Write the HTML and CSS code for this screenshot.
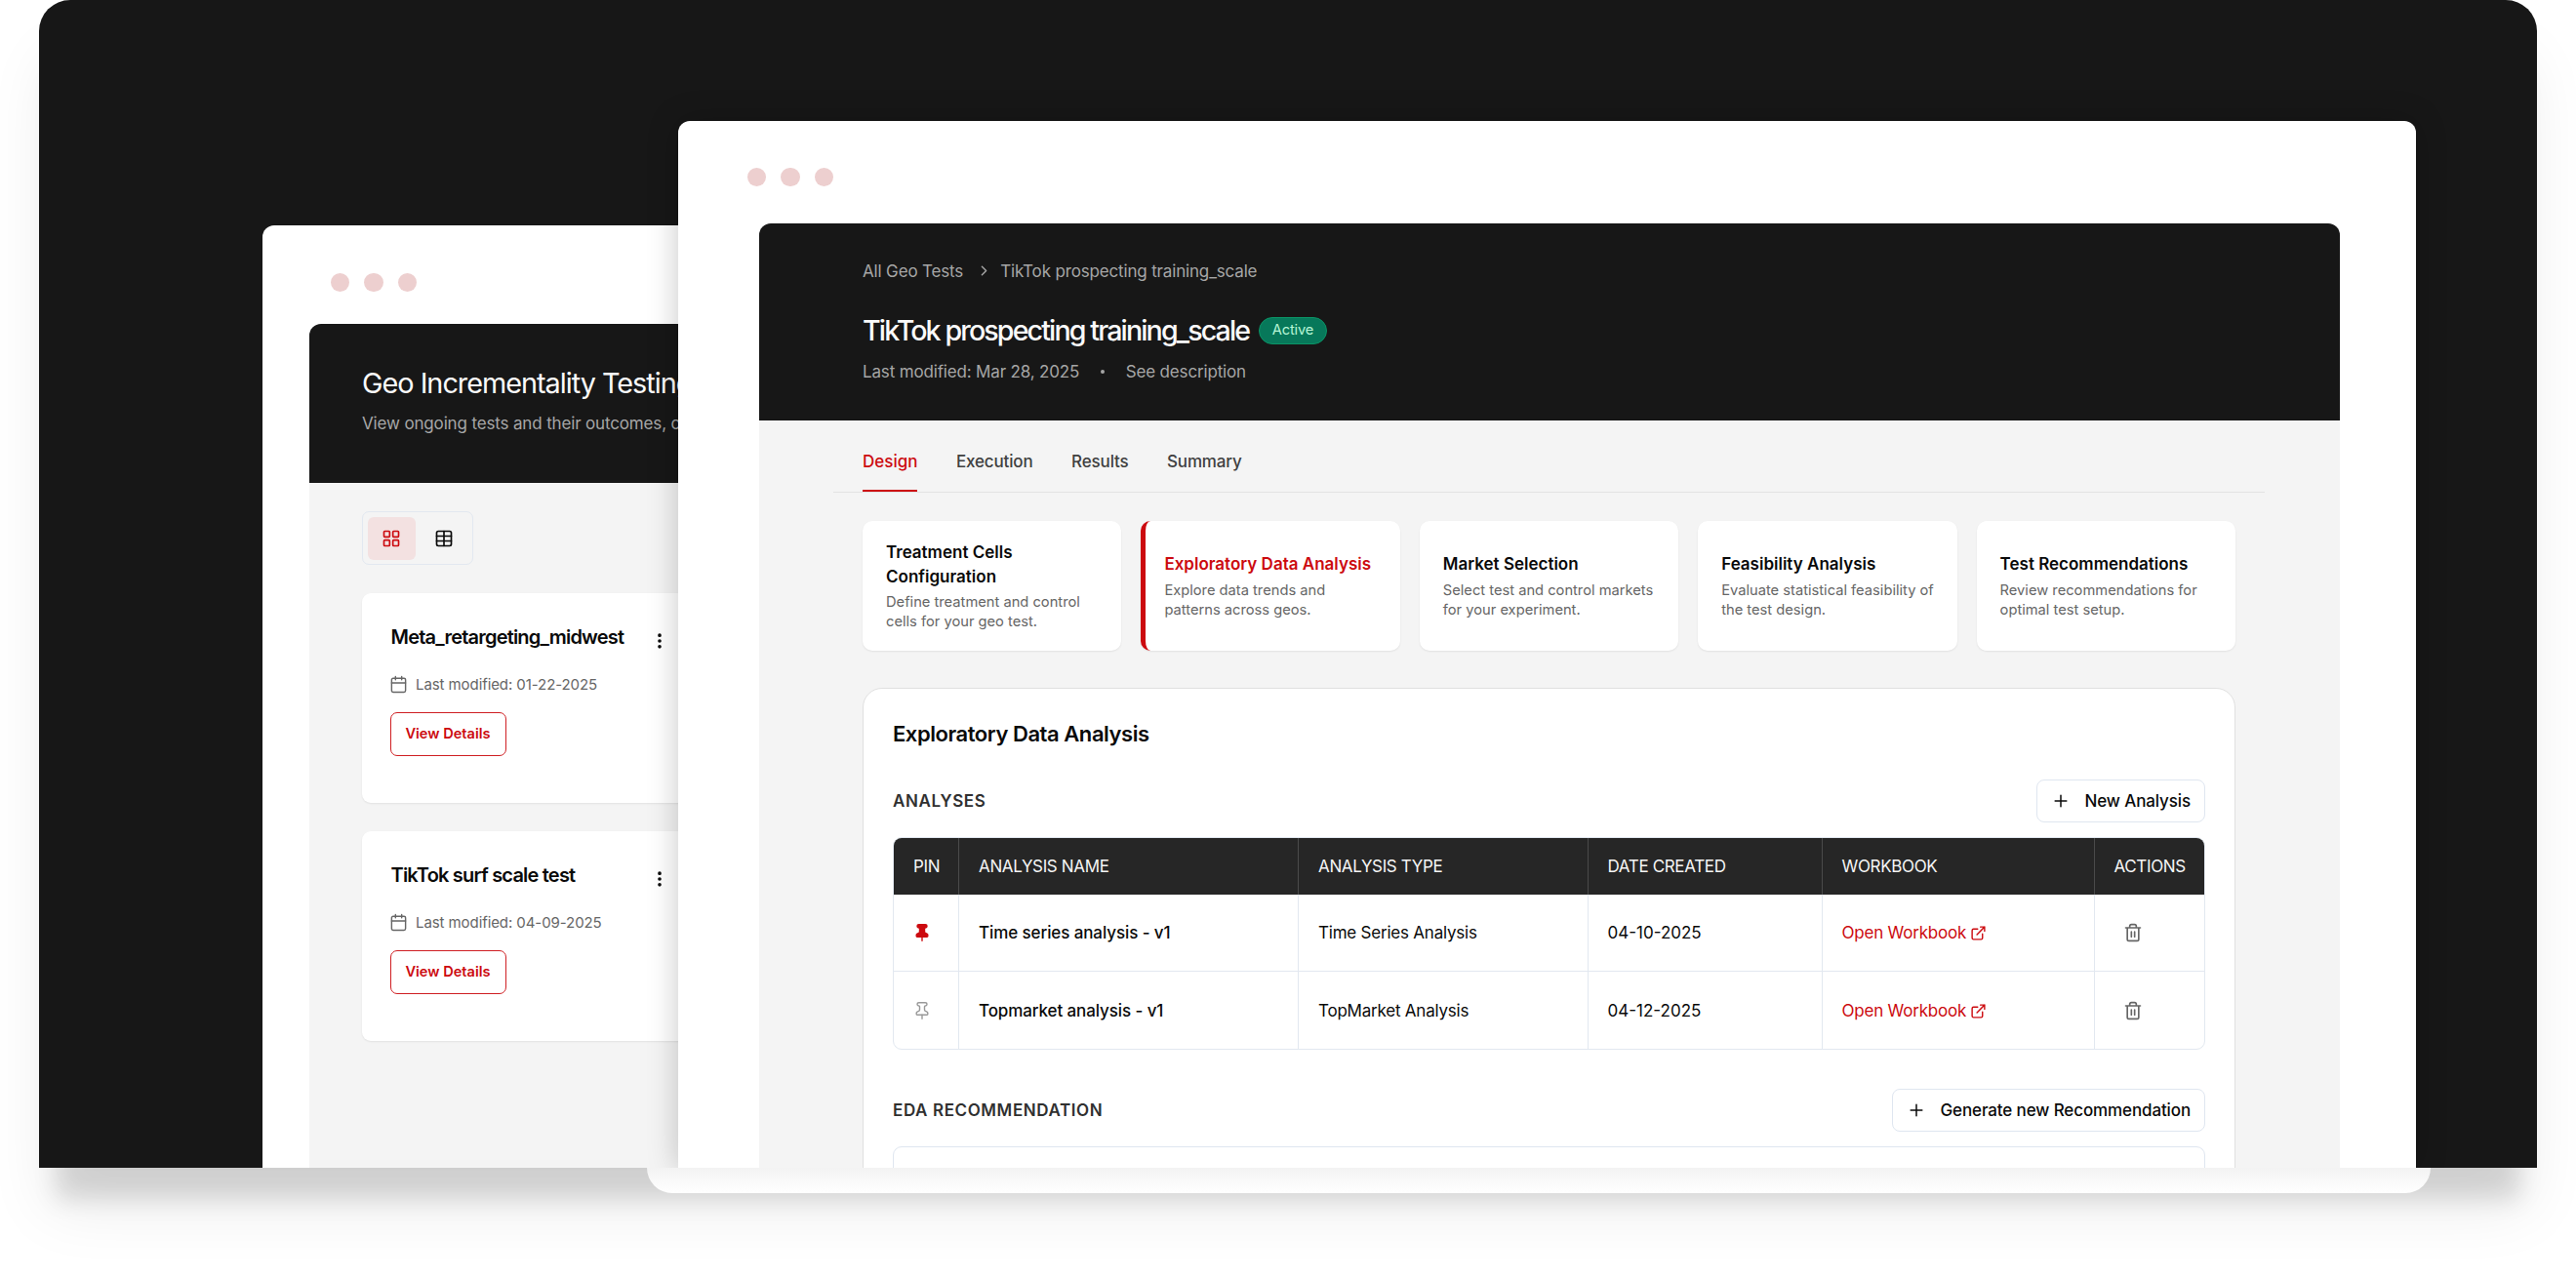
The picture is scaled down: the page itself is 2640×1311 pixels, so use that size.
FILE: index.html
```html
<!DOCTYPE html>
<html lang="en">
<head>
    <meta charset="utf-8">
    <meta name="viewport" content="width=device-width, initial-scale=1">
    <title>Geo Incrementality Testing</title>
    <link rel="stylesheet" href="styles.css">
</head>
<body>
    <!-- shared icons -->
    <svg class="sprite" width="0" height="0">
        <symbol id="icon-calendar" viewBox="0 0 24 24"><rect x="3" y="4" width="18" height="18" rx="2"/><path d="M16 2v4M8 2v4M3 10h18"/></symbol>
        <symbol id="icon-more" viewBox="0 0 24 24"><circle cx="12" cy="12" r="1"/><circle cx="12" cy="5" r="1"/><circle cx="12" cy="19" r="1"/></symbol>
        <symbol id="icon-plus" viewBox="0 0 24 24"><path d="M5 12h14M12 5v14"/></symbol>
        <symbol id="icon-pin" viewBox="0 0 24 24"><path d="M12 17v5"/><path d="M9 10.76a2 2 0 0 1-1.11 1.79l-1.78.9A2 2 0 0 0 5 15.24V16a1 1 0 0 0 1 1h12a1 1 0 0 0 1-1v-.76a2 2 0 0 0-1.11-1.79l-1.78-.9A2 2 0 0 1 15 10.76V7a1 1 0 0 1 1-1 2 2 0 0 0 0-4H8a2 2 0 0 0 0 4 1 1 0 0 1 1 1z"/></symbol>
        <symbol id="icon-external" viewBox="0 0 24 24"><path d="M15 3h6v6M10 14 21 3M18 13v6a2 2 0 0 1-2 2H5a2 2 0 0 1-2-2V8a2 2 0 0 1 2-2h6"/></symbol>
        <symbol id="icon-trash" viewBox="0 0 24 24"><path d="M3 6h18M19 6v14a2 2 0 0 1-2 2H7a2 2 0 0 1-2-2V6M8 6V4a2 2 0 0 1 2-2h4a2 2 0 0 1 2 2v2M10 11v6M14 11v6"/></symbol>
    </svg>

    <div class="scene">
        <div class="stage">

            <section class="window window--back">
                <div class="window__dots"><i></i><i></i><i></i></div>
                <div class="overview">
                    <header class="overview__header">
                        <h1 class="overview__title">Geo Incrementality Testing</h1>
                        <p class="overview__subtitle">View ongoing tests and their outcomes, or create a new test.</p>
                    </header>
                    <div class="overview__body">
                        <div class="view-toggle">
                            <button class="view-toggle__button view-toggle__button--active">
                                <svg class="icon" viewBox="0 0 24 24"><rect x="3" y="3" width="7" height="7" rx="1"/><rect x="14" y="3" width="7" height="7" rx="1"/><rect x="14" y="14" width="7" height="7" rx="1"/><rect x="3" y="14" width="7" height="7" rx="1"/></svg>
                            </button>
                            <button class="view-toggle__button">
                                <svg class="icon" viewBox="0 0 24 24"><path d="M12 3v18M3 9h18M3 15h18"/><rect x="3" y="3" width="18" height="18" rx="2"/></svg>
                            </button>
                        </div>

                        <article class="test-card">
                            <div class="test-card__top">
                                <h2 class="test-card__title">Meta_retargeting_midwest</h2>
                                <svg class="icon test-card__more"><use href="#icon-more"/></svg>
                            </div>
                            <div class="test-card__date"><svg class="icon"><use href="#icon-calendar"/></svg><span>Last modified: 01-22-2025</span></div>
                            <button class="test-card__button">View Details</button>
                        </article>

                        <article class="test-card">
                            <div class="test-card__top">
                                <h2 class="test-card__title">TikTok surf scale test</h2>
                                <svg class="icon test-card__more"><use href="#icon-more"/></svg>
                            </div>
                            <div class="test-card__date"><svg class="icon"><use href="#icon-calendar"/></svg><span>Last modified: 04-09-2025</span></div>
                            <button class="test-card__button">View Details</button>
                        </article>
                    </div>
                </div>
            </section>

            <section class="window window--front">
                <div class="window__dots"><i></i><i></i><i></i></div>
                <div class="detail">
                    <header class="detail__header">
                        <div class="breadcrumb">
                            <span>All Geo Tests</span>
                            <svg class="icon breadcrumb__arrow" viewBox="0 0 24 24"><path d="m9 18 6-6-6-6"/></svg>
                            <span>TikTok prospecting training_scale</span>
                        </div>
                        <div class="detail__heading">
                            <h1 class="detail__title">TikTok prospecting training_scale</h1>
                            <span class="badge">Active</span>
                        </div>
                        <div class="detail__meta">
                            <span>Last modified: Mar 28, 2025</span>
                            <i class="detail__separator"></i>
                            <span>See description</span>
                        </div>
                    </header>

                    <nav class="tabs">
                        <a class="tabs__item tabs__item--active">Design</a>
                        <a class="tabs__item">Execution</a>
                        <a class="tabs__item">Results</a>
                        <a class="tabs__item">Summary</a>
                    </nav>

                    <div class="steps">
                        <div class="step">
                            <h3 class="step__title">Treatment Cells Configuration</h3>
                            <p class="step__text">Define treatment and control cells for your geo test.</p>
                        </div>
                        <div class="step step--active">
                            <h3 class="step__title">Exploratory Data Analysis</h3>
                            <p class="step__text">Explore data trends and patterns across geos.</p>
                        </div>
                        <div class="step">
                            <h3 class="step__title">Market Selection</h3>
                            <p class="step__text">Select test and control markets for your experiment.</p>
                        </div>
                        <div class="step">
                            <h3 class="step__title">Feasibility Analysis</h3>
                            <p class="step__text">Evaluate statistical feasibility of the test design.</p>
                        </div>
                        <div class="step">
                            <h3 class="step__title">Test Recommendations</h3>
                            <p class="step__text">Review recommendations for optimal test setup.</p>
                        </div>
                    </div>

                    <div class="panel">
                        <h2 class="panel__title">Exploratory Data Analysis</h2>

                        <div class="panel__bar">
                            <h3 class="panel__label">ANALYSES</h3>
                            <button class="button"><svg class="icon"><use href="#icon-plus"/></svg><span>New Analysis</span></button>
                        </div>

                        <div class="table">
                            <div class="table__row table__row--head">
                                <div>PIN</div>
                                <div>ANALYSIS NAME</div>
                                <div>ANALYSIS TYPE</div>
                                <div>DATE CREATED</div>
                                <div>WORKBOOK</div>
                                <div>ACTIONS</div>
                            </div>
                            <div class="table__row">
                                <div><svg class="icon table__pin table__pin--on"><use href="#icon-pin"/></svg></div>
                                <div class="table__name">Time series analysis - v1</div>
                                <div>Time Series Analysis</div>
                                <div class="table__date">04-10-2025</div>
                                <div><a class="table__link">Open Workbook<svg class="icon"><use href="#icon-external"/></svg></a></div>
                                <div><svg class="icon table__trash"><use href="#icon-trash"/></svg></div>
                            </div>
                            <div class="table__row">
                                <div><svg class="icon table__pin"><use href="#icon-pin"/></svg></div>
                                <div class="table__name">Topmarket analysis - v1</div>
                                <div>TopMarket Analysis</div>
                                <div class="table__date">04-12-2025</div>
                                <div><a class="table__link">Open Workbook<svg class="icon"><use href="#icon-external"/></svg></a></div>
                                <div><svg class="icon table__trash"><use href="#icon-trash"/></svg></div>
                            </div>
                        </div>

                        <div class="panel__bar panel__bar--second">
                            <h3 class="panel__label">EDA RECOMMENDATION</h3>
                            <button class="button"><svg class="icon"><use href="#icon-plus"/></svg><span>Generate new Recommendation</span></button>
                        </div>
                        <div class="panel__box"></div>
                    </div>
                </div>
            </section>

        </div>
        <div class="scene__lip"></div>
    </div>
</body>
</html>
```

FILE: styles.css
```css
* {
    box-sizing: border-box;
}
body {
    margin: 0;
    background: #fff;
    font-family: Inter, "Liberation Sans", sans-serif;
    font-size: 17px;
    line-height: 24px;
    color: #0a0a0a;
}
h1, h2, h3, p {
    margin: 0;
}
button {
    font: inherit;
    color: inherit;
    background: none;
    border: 0;
    padding: 0;
}
.sprite {
    position: absolute;
}
.icon {
    display: block;
    flex: none;
    width: 20px;
    height: 20px;
    fill: none;
    stroke: currentColor;
    stroke-width: 2;
    stroke-linecap: round;
    stroke-linejoin: round;
}

/* scene */
.scene {
    position: relative;
    height: 1311px;
    padding: 0 40px;
    overflow: hidden;
}
.stage {
    position: relative;
    height: 1197px;
    border-radius: 32px 32px 0 0;
    background: #171717;
    overflow: hidden;
    box-shadow: 0 50px 24px -18px rgba(0, 0, 0, .13), 0 50px 64px -8px rgba(0, 0, 0, .08);
}
.scene__lip {
    position: absolute;
    left: 663px;
    top: 1197px;
    width: 1828px;
    height: 26px;
    border-radius: 0 0 32px 32px;
    background: linear-gradient(#f3f3f3, #fff);
}

/* windows */
.window {
    position: absolute;
    bottom: 0;
    background: #fff;
    border-radius: 12px 12px 0 0;
    overflow: hidden;
}
.window--back {
    left: 229px;
    top: 231px;
    width: 900px;
    padding: 0 48px;
}
.window--front {
    left: 654.5px;
    top: 123.5px;
    width: 1781.5px;
    padding: 0 78.5px 0 83px;
    box-shadow: 0 0 32px rgba(0, 0, 0, .22);
}
.window__dots {
    display: flex;
    gap: 15.2px;
}
.window__dots i {
    width: 19.2px;
    height: 19.2px;
    border-radius: 50%;
    background: #edcfcf;
}
.window--back .window__dots {
    height: 101px;
    padding: 49px 0 0 22px;
}
.window--front .window__dots {
    height: 105px;
    padding-top: 48px;
    margin-left: -11.5px;
}

/* back window */
.overview {
    height: 900px;
    border-radius: 12px 12px 0 0;
    background: #f4f4f4;
    overflow: hidden;
    white-space: nowrap;
}
.overview__header {
    height: 162.5px;
    padding: 43px 54px 0;
    background: #171717;
}
.overview__title {
    font-size: 28.8px;
    font-weight: 400;
    line-height: 36px;
    letter-spacing: -1px;
    color: #fafafa;
}
.overview__subtitle {
    margin-top: 11px;
    letter-spacing: -.15px;
    color: #a6a6a6;
}
.overview__body {
    padding: 29.5px 54px;
}
.view-toggle {
    display: flex;
    gap: 5px;
    width: 114px;
    height: 55px;
    padding: 4.5px;
    border: 1px solid #e2e8f0;
    border-radius: 7px;
}
.view-toggle__button {
    display: flex;
    align-items: center;
    justify-content: center;
    width: 49px;
    height: 44px;
    border-radius: 6px;
}
.view-toggle__button--active {
    background: #f3e1e1;
    color: #cc0a0f;
}
.test-card {
    height: 214.5px;
    margin-top: 29.3px;
    padding: 31px 30px 30px 29.5px;
    border-radius: 9px;
    background: #fff;
    box-shadow: 0 1px 2px rgba(0, 0, 0, .08);
}
.test-card__top {
    display: flex;
    height: 40px;
}
.test-card__title {
    width: 265.5px;
    font-size: 20px;
    font-weight: 600;
    line-height: 28px;
    letter-spacing: -.8px;
}
.test-card__more {
    margin-top: 8px;
    stroke-width: 2.4;
}
.test-card__date {
    display: flex;
    align-items: center;
    gap: 8px;
    margin: 10.5px 0 16px -1.5px;
    font-size: 15px;
    letter-spacing: -.08px;
    color: #666;
}
.test-card__date .icon {
    width: 19px;
    height: 19px;
    stroke-width: 1.8;
}
.test-card__button {
    display: block;
    width: 119px;
    height: 45px;
    margin-left: -1px;
    border: 1.5px solid #cf1f23;
    border-radius: 7px;
    font-size: 14.6px;
    font-weight: 600;
    color: #cc0a0f;
}

/* front window */
.detail {
    height: 1000px;
    border-radius: 12px 12px 0 0;
    background: #f4f4f4;
    overflow: hidden;
}
.detail__header {
    height: 202px;
    padding: 37px 106.5px 0;
    background: #171717;
    color: #a6a6a6;
    letter-spacing: -.16px;
}
.breadcrumb {
    display: flex;
    align-items: center;
}
.breadcrumb__arrow {
    width: 17px;
    height: 17px;
    margin: 0 8.5px 0 12.5px;
}
.detail__heading {
    display: flex;
    align-items: center;
    gap: 10px;
    height: 36px;
    margin-top: 31px;
}
.detail__title {
    font-size: 28.6px;
    font-weight: 500;
    line-height: 36px;
    letter-spacing: -1.87px;
    color: #fafafa;
}
.badge {
    width: 69.5px;
    height: 28px;
    border: 1.5px solid #0a9466;
    border-radius: 14px;
    background: #07785a;
    font-size: 14.7px;
    line-height: 25px;
    text-align: center;
    color: #b5f5d5;
}
.detail__meta {
    display: flex;
    align-items: center;
    margin-top: 12px;
}
.detail__separator {
    width: 4px;
    height: 4px;
    margin: 0 21.5px 0 22px;
    border-radius: 50%;
    background: #a6a6a6;
}
.tabs {
    display: flex;
    gap: 39.5px;
    height: 74.5px;
    margin: 0 76.5px;
    padding-left: 30px;
    border-bottom: 1px solid #e2e2e2;
    font-weight: 500;
    letter-spacing: -.15px;
    color: #404040;
}
.tabs__item {
    height: 73.5px;
    padding-top: 30px;
}
.tabs__item--active {
    color: #cc0a0f;
    border-bottom: 2.5px solid #cc0a0f;
    letter-spacing: 0;
}
.steps {
    display: grid;
    grid-template-columns: repeat(5, 1fr);
    gap: 20px;
    margin: 29px 106.5px 38.5px;
}
.step {
    display: flex;
    flex-direction: column;
    justify-content: center;
    height: 132.5px;
    padding: 1px 20px 0 24px;
    border-radius: 10px;
    background: #fff;
    box-shadow: 0 1px 2px rgba(0, 0, 0, .08);
}
.step--active {
    padding-left: 19px;
    border-left: 5px solid #cc0a0f;
}
.step--active .step__title {
    color: #cc0a0f;
}
.step__title {
    font-size: 17px;
    font-weight: 600;
    line-height: 24.5px;
}
.step__text {
    margin-top: 5px;
    font-size: 14.7px;
    line-height: 19.6px;
    color: #666;
}
.panel {
    height: 560px;
    margin: 0 106.5px;
    padding: 32px 30px 0;
    border: 1px solid #e0e0e0;
    border-radius: 20px;
    background: #fff;
}
.panel__title {
    font-size: 22px;
    font-weight: 600;
    line-height: 28px;
    letter-spacing: -.45px;
}
.panel__bar {
    display: flex;
    align-items: center;
    justify-content: space-between;
    margin: 32.5px 0 15px;
}
.panel__bar--second {
    margin: 40px 0 15px;
}
.panel__label {
    font-size: 17px;
    font-weight: 600;
    letter-spacing: .6px;
    color: #303030;
}
.button {
    display: flex;
    align-items: center;
    gap: 15px;
    height: 44px;
    padding: 0 14px;
    border: 1px solid #dfe6f0;
    border-radius: 8px;
    font-weight: 500;
    letter-spacing: -.12px;
}
.button .icon {
    stroke-width: 1.8;
}
.table {
    border: 1px solid #e2e8f0;
    border-radius: 9px;
    overflow: hidden;
    letter-spacing: -.22px;
}
.table__row {
    display: grid;
    grid-template-columns: 67px 348px 296.5px 240px 279px 1fr;
    height: 79.5px;
    border-bottom: 1px solid #e2e8f0;
}
.table__row:last-child {
    height: 79px;
    border-bottom: 0;
}
.table__row > div {
    display: flex;
    align-items: center;
    padding: 1px 0 0 20px;
    border-right: 1px solid #e2e8f0;
}
.table__row > div:last-child {
    border-right: 0;
}
.table__row--head {
    height: 58px;
    border-bottom: 0;
    background: #262626;
    color: #f5f5f5;
    letter-spacing: -.35px;
}
.table__row--head > div {
    border-color: #4a4a4a;
}
.table .table__name {
    font-weight: 500;
    letter-spacing: -.1px;
}
.table__date {
    letter-spacing: 0;
}
.table__pin {
    margin-left: -1.5px;
    color: #999;
    stroke-width: 1.7;
}
.table__pin--on {
    color: #cc0a0f;
    fill: currentColor;
}
.table__link {
    display: flex;
    align-items: center;
    gap: 4px;
    color: #cc0a0f;
}
.table__link .icon {
    width: 17px;
    height: 17px;
}
.table__trash {
    margin-left: 9px;
    color: #666;
}
.panel__box {
    height: 120px;
    border: 1px solid #dfe6f0;
    border-radius: 9px;
}
```
